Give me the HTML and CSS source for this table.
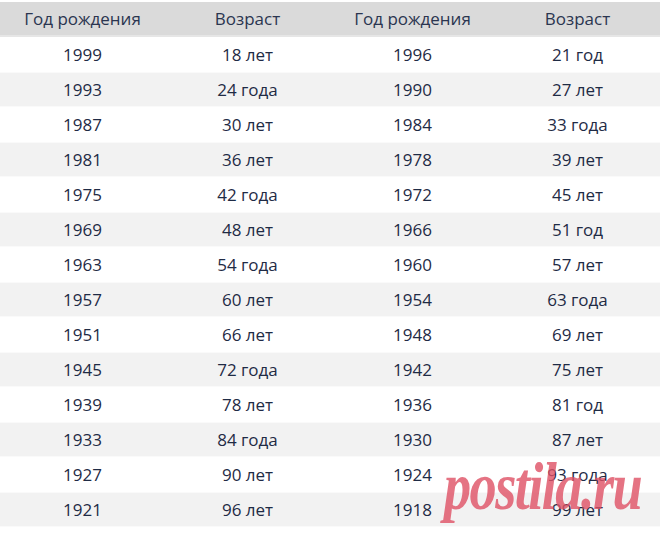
FILE: index.html
```html
<!DOCTYPE html>
<html lang="ru">
<head>
<meta charset="utf-8">
<link rel="stylesheet" href="styles.css">
</head>
<body>
<div class="page">
  <div class="table">
    <div class="row head"><span>Год рождения</span><span>Возраст</span><span>Год рождения</span><span>Возраст</span></div>
    <div class="row"><span>1999</span><span>18 лет</span><span>1996</span><span>21 год</span></div>
    <div class="row alt"><span>1993</span><span>24 года</span><span>1990</span><span>27 лет</span></div>
    <div class="row"><span>1987</span><span>30 лет</span><span>1984</span><span>33 года</span></div>
    <div class="row alt"><span>1981</span><span>36 лет</span><span>1978</span><span>39 лет</span></div>
    <div class="row"><span>1975</span><span>42 года</span><span>1972</span><span>45 лет</span></div>
    <div class="row alt"><span>1969</span><span>48 лет</span><span>1966</span><span>51 год</span></div>
    <div class="row"><span>1963</span><span>54 года</span><span>1960</span><span>57 лет</span></div>
    <div class="row alt"><span>1957</span><span>60 лет</span><span>1954</span><span>63 года</span></div>
    <div class="row"><span>1951</span><span>66 лет</span><span>1948</span><span>69 лет</span></div>
    <div class="row alt"><span>1945</span><span>72 года</span><span>1942</span><span>75 лет</span></div>
    <div class="row"><span>1939</span><span>78 лет</span><span>1936</span><span>81 год</span></div>
    <div class="row alt"><span>1933</span><span>84 года</span><span>1930</span><span>87 лет</span></div>
    <div class="row"><span>1927</span><span>90 лет</span><span>1924</span><span>93 года</span></div>
    <div class="row alt"><span>1921</span><span>96 лет</span><span>1918</span><span>99 лет</span></div>
  </div>
  <div class="watermark">postila.ru</div>
</div>
</body>
</html>
```
FILE: styles.css
```css
html, body {
  margin: 0;
  padding: 0;
  background: #ffffff;
}
.page {
  position: relative;
  width: 660px;
  height: 535px;
  overflow: hidden;
  font-family: "Open Sans", "Noto Sans", sans-serif;
  color: #1f2b45;
}
.table {
  display: flex;
  flex-direction: column;
  padding-top: 2px;
}
.row {
  display: grid;
  grid-template-columns: repeat(4, 165px);
  height: 35px;
  align-items: center;
  font-size: 17px;
  box-sizing: border-box;
}
.row span {
  text-align: center;
}
.row.head {
  height: 35px;
  background: #dadada;
  border-bottom: 2px solid #e6e6e6;
  color: #2a3550;
}
.row.alt {
  background: #f2f2f2;
  border-top: 1px solid #fafafa;
  border-bottom: 1px solid #fafafa;
}
.watermark {
  position: absolute;
  left: 444px;
  top: 448px;
  font-family: "Liberation Serif", "DejaVu Serif", serif;
  font-weight: bold;
  font-style: italic;
  font-size: 68px;
  line-height: 76px;
  letter-spacing: -2px;
  color: rgba(222, 80, 100, 0.8);
  white-space: nowrap;
  transform: scaleX(0.8);
  transform-origin: left top;
}
```
